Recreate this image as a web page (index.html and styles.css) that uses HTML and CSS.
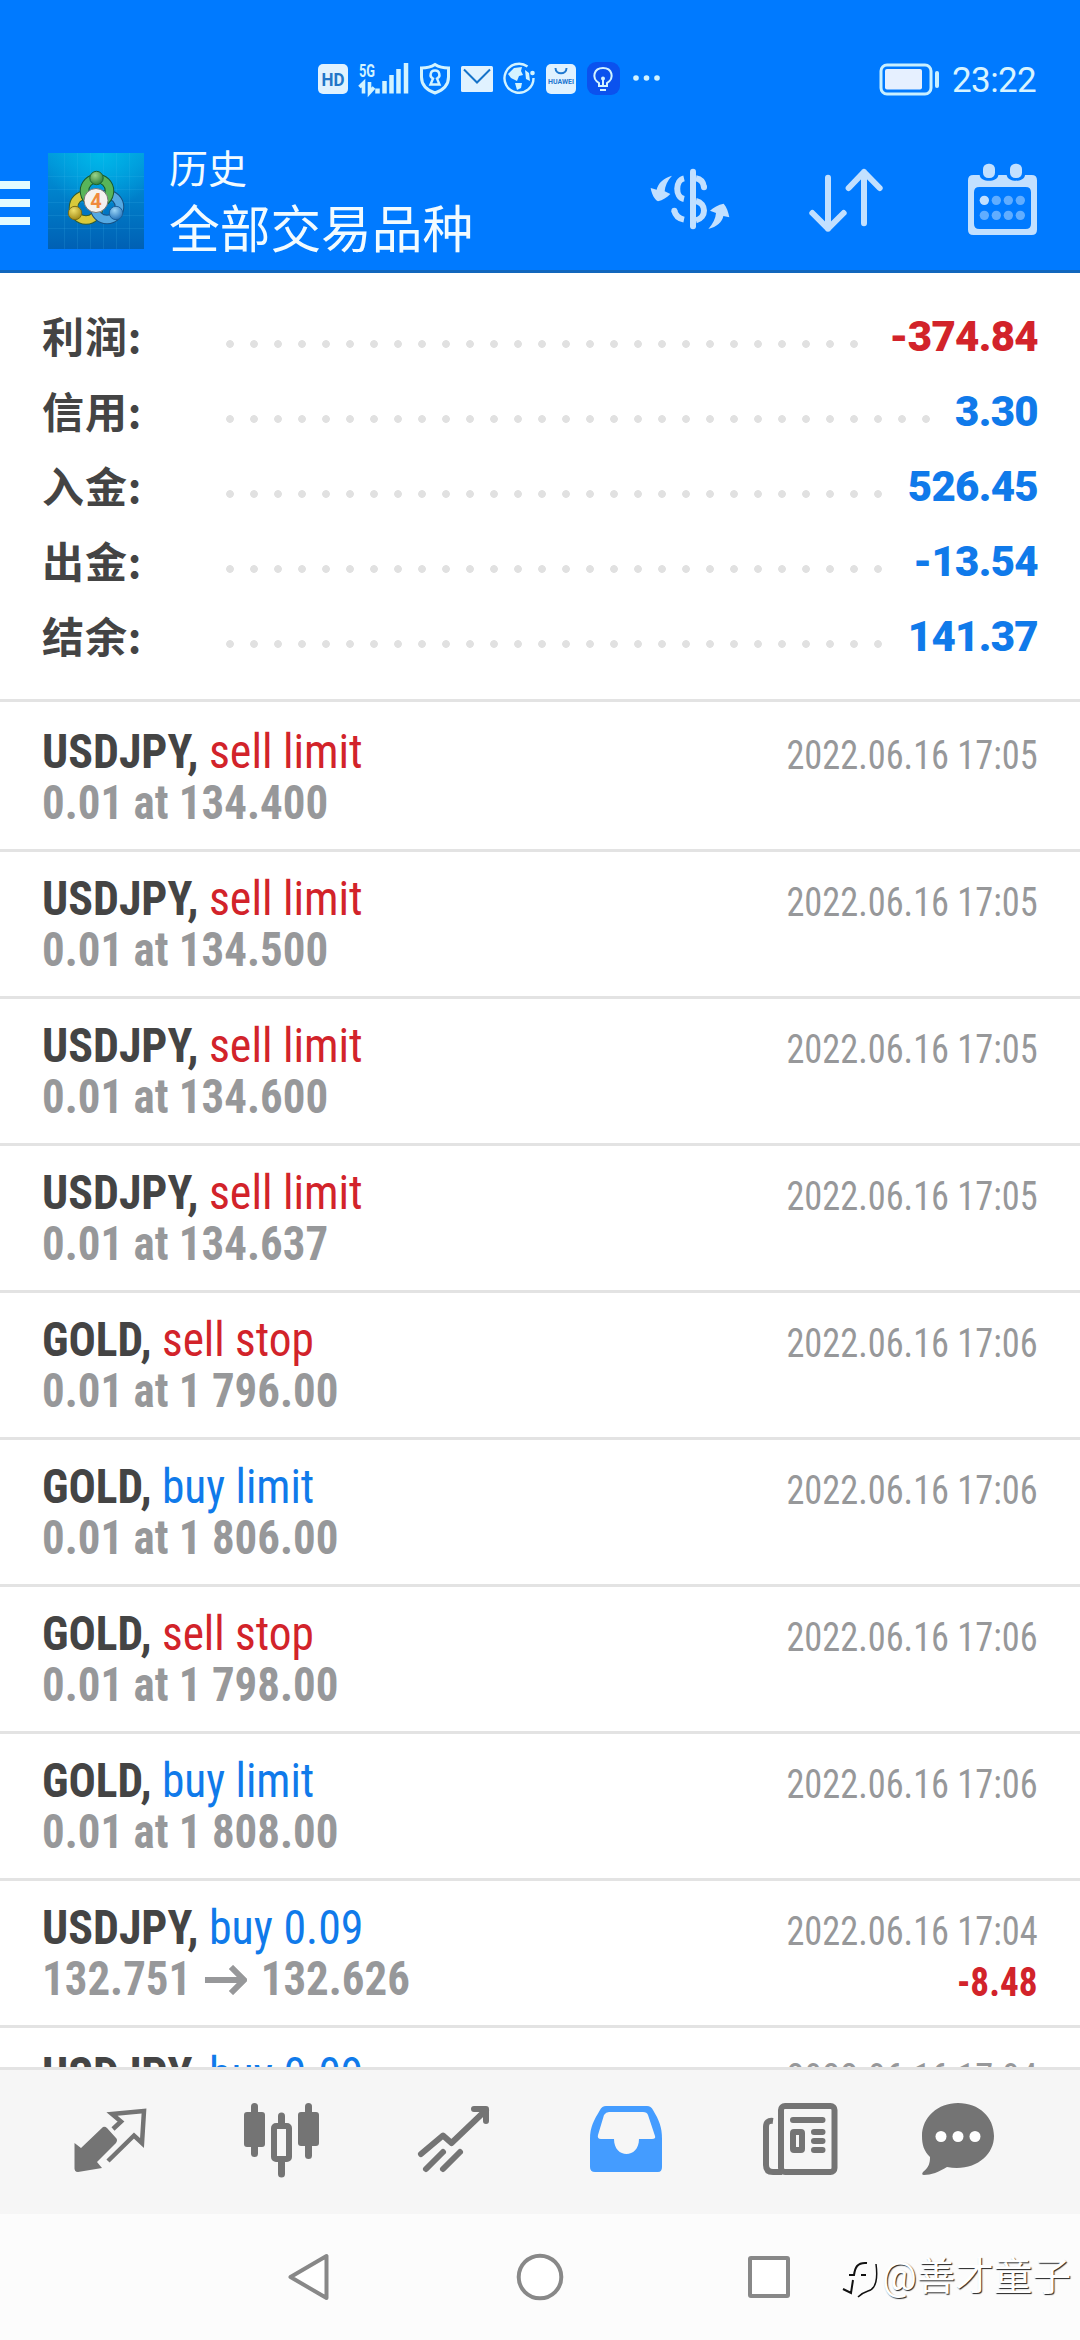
FILE: index.html
```html
<!DOCTYPE html>
<html lang="zh-CN">
<head>
<meta charset="utf-8">
<title>历史</title>
<link rel="stylesheet" href="styles.css">
</head>
<body>
<div class="screen">
<header class="header">
  <div class="statusbar">
    <svg class="status-icons" viewBox="300 40 400 80" width="400" height="80">
      <rect x="318" y="64" width="30" height="30" rx="5" fill="#e0f2ff"/>
      <text x="321.500" y="86" class="hd" textLength="23" lengthAdjust="spacingAndGlyphs">HD</text>
      <text x="359" y="76.500" class="net" textLength="16" lengthAdjust="spacingAndGlyphs">5G</text>
      <g stroke="#d2f3ff" stroke-width="3.600" fill="none">
        <path d="M359.500 87l4-4v10.500M369.500 82v10.500l4.500-5"/>
        <path d="M377.500 88.500v5M384.500 81v12.500M391.500 75v18.500M398.500 69v24.500M406 63v30.500" stroke-width="4.500"/>
      </g>
      <path d="M435 64.500c4 2.500 9 3.500 13.500 3.500v9c0 8-5 13-13.500 16c-8.500-3-13.500-8-13.500-16v-9c4.500 0 9.500-1 13.500-3.500z" fill="none" stroke="#d2f3ff" stroke-width="3"/>
      <path d="M435 70.500a4.200 4.200 0 0 1 2 8l2.500 6h-9l2.500-6a4.200 4.200 0 0 1 2-8z" fill="#007aff" stroke="#d2f3ff" stroke-width="2.400"/>
      <rect x="461" y="66" width="32" height="26" rx="1.500" fill="#e0f2ff"/>
      <path d="M464 69.500l13 13 13-13" fill="none" stroke="#1673c8" stroke-width="2"/>
      <path d="M533.500 78a14.500 14.500 0 1 1-6-11.500" fill="none" stroke="#d2f3ff" stroke-width="2.400"/>
      <circle cx="532.500" cy="73" r="2.300" fill="#d2f3ff"/>
      <path d="M508 74l6-6 8-1-1 4 2 4-4 1-2 5-6-3zM525 70l4 3 1 8-4-2zM515 83l7 0-1 5-4 2z" fill="#d2f3ff"/>
      <rect x="546" y="64" width="30" height="30" rx="5" fill="#e0f2ff"/>
      <path d="M555.500 68c0 7 11 7 11 0" fill="none" stroke="#1e78d0" stroke-width="2"/>
      <text x="548" y="84" class="store" textLength="26" lengthAdjust="spacingAndGlyphs">HUAWEI</text>
      <rect x="587" y="62" width="33" height="33" rx="9" fill="#0b52ee"/>
      <path d="M599 86v-3c-8-5-5-15 4-15s12 10 4 15v3zM600 90h6M603 78v8" fill="none" stroke="#d2f3ff" stroke-width="2"/>
      <circle cx="603" cy="78.500" r="2" fill="#d2f3ff"/>
      <g fill="#d2f3ff"><circle cx="636" cy="78" r="2.800"/><circle cx="646.500" cy="78" r="2.800"/><circle cx="657" cy="78" r="2.800"/></g>
    </svg>
    <div class="status-right">
      <svg viewBox="878 60 64 36" width="64" height="36">
        <rect x="881" y="64" width="50" height="29" rx="6" fill="none" stroke="#c8efff" stroke-width="3"/>
        <rect x="885" y="68" width="37" height="20.500" rx="2" fill="#e6f0ff"/>
        <rect x="935" y="70" width="4" height="17" rx="2" fill="#c8efff"/>
      </svg>
      <span class="clock">23:22</span>
    </div>
  </div>
  <div class="appbar">
    <div class="burger"><i></i><i></i><i></i></div>
    <svg class="logo" viewBox="0 0 96 96" width="96" height="96">
      <defs>
        <linearGradient id="sky" x1="0" y1="0" x2="0" y2="1"><stop offset="0" stop-color="#0099dc"/><stop offset="1" stop-color="#0060b4"/></linearGradient>
        <radialGradient id="glow" cx=".55" cy="0" r=".6"><stop offset="0" stop-color="#00b8ea"/><stop offset="1" stop-color="#00b8ea" stop-opacity="0"/></radialGradient>
        <radialGradient id="gr" cx=".4" cy=".3" r=".8"><stop offset="0" stop-color="#9bd48a"/><stop offset="1" stop-color="#1f7430"/></radialGradient>
        <radialGradient id="ye" cx=".4" cy=".3" r=".8"><stop offset="0" stop-color="#f0e06a"/><stop offset="1" stop-color="#98800c"/></radialGradient>
        <radialGradient id="bl" cx=".4" cy=".3" r=".8"><stop offset="0" stop-color="#9ad4f6"/><stop offset="1" stop-color="#1768b4"/></radialGradient>
      </defs>
      <rect width="96" height="96" fill="url(#sky)"/><rect width="96" height="96" fill="url(#glow)"/>
      <path d="M0 23.500h96M0 36.500h96M0 49.500h96M0 62.500h96M0 75.500h96M16.500 0v96M29.500 0v96M42.500 0v96M55.500 0v96M68.500 0v96M81.500 0v96" stroke="#4cc4f0" stroke-opacity=".15"/>
      <circle cx="38" cy="54.500" r="12.500" fill="none" stroke="#315d30" stroke-width="9.500"/>
      <circle cx="38" cy="54.500" r="12.500" fill="none" stroke="#d8c93a" stroke-width="7.500"/>
      <circle cx="59" cy="54" r="12.500" fill="none" stroke="#174f80" stroke-width="9.500"/>
      <circle cx="59" cy="54" r="12.500" fill="none" stroke="#55a9e2" stroke-width="7.500"/>
      <circle cx="49" cy="38" r="12.500" fill="none" stroke="#19582b" stroke-width="9.500"/>
      <circle cx="49" cy="38" r="12.500" fill="none" stroke="#58b55a" stroke-width="7.500"/>
      <circle cx="48.500" cy="25" r="6.700" fill="url(#gr)" stroke="#1d6430"/>
      <circle cx="27" cy="60" r="6.700" fill="url(#ye)" stroke="#7c6c12"/>
      <circle cx="68" cy="60" r="6.700" fill="url(#bl)" stroke="#1a609e"/>
      <circle cx="48" cy="47.500" r="12" fill="#f4f1ee" stroke="#777" stroke-width="1"/>
      <text x="48" y="54.500" class="four" text-anchor="middle">4</text>
    </svg>
    <div class="titles"><div class="title">历史</div><div class="subtitle">全部交易品种</div></div>
    <div class="actions">
      <svg viewBox="45 60 270 240" width="90" height="80" fill="#c2e0ff">
        <path d="M189 95V259" stroke="#c2e0ff" stroke-width="18" stroke-linecap="round"/>
        <path d="M162 115C136 121 134 171 162 177M133 212C136 227 147 236 162 239M198 115C212 117 220 127 222 142M198 183C230 190 230 233 198 241" fill="none" stroke="#c2e0ff" stroke-width="18"/>
        <circle cx="133" cy="212" r="9"/><circle cx="222" cy="142" r="9"/>
        <path d="M126 107C112 122 105 139 104 154L121 162C111 172 98 181 84 184C73 178 65 162 62 144L80 149C84 130 101 113 126 107Z"/>
        <path d="M235 267C249 251 257 235 258 219L240 212C250 202 265 194 281 191C290 201 295 216 298 232L280 228C277 246 260 261 235 267Z"/>
      </svg>
      <svg class="sort" viewBox="525 60 240 240" width="80" height="80" fill="none" stroke="#c2e0ff" stroke-width="18" stroke-linecap="round" stroke-linejoin="round">
        <path d="M594 113V266M547 219L594 266 641 219M702 250V96M656 144L702 96 749 144"/>
      </svg>
      <svg viewBox="1005 60 225 240" width="75" height="80">
        <path d="M1030 105H1049C1050 128 1104 128 1105 105H1130C1132 128 1184 128 1185 105H1205Q1221 105 1221 121V269Q1221 285 1205 285H1030Q1014 285 1014 269V121Q1014 105 1030 105ZM1048 141Q1032 141 1032 157V251Q1032 267 1048 267H1187Q1203 267 1203 251V157Q1203 141 1187 141Z" fill="#c2e0ff" fill-rule="evenodd"/>
        <rect x="1059" y="71" width="36" height="43" rx="16" fill="#c2e0ff"/><rect x="1140" y="71" width="36" height="43" rx="16" fill="#c2e0ff"/>
        <circle cx="1063" cy="181" r="14" fill="#c2e0ff"/>
        <g fill="#61adff"><circle cx="1099" cy="181" r="14"/><circle cx="1135" cy="181" r="14"/><circle cx="1171" cy="181" r="14"/><circle cx="1063" cy="226" r="14"/><circle cx="1099" cy="226" r="14"/><circle cx="1135" cy="226" r="14"/><circle cx="1171" cy="226" r="14"/></g>
      </svg>
    </div>
  </div>
</header>
<section class="summary">
  <div class="sum-row"><span class="label">利润:</span><i class="leader"></i><b class="red">-374.84</b></div>
  <div class="sum-row"><span class="label">信用:</span><i class="leader"></i><b>3.30</b></div>
  <div class="sum-row"><span class="label">入金:</span><i class="leader"></i><b>526.45</b></div>
  <div class="sum-row"><span class="label">出金:</span><i class="leader"></i><b>-13.54</b></div>
  <div class="sum-row"><span class="label">结余:</span><i class="leader"></i><b>141.37</b></div>
</section>
<main class="deals">
  <div class="deal"><div class="name"><b>USDJPY,</b> <span class="red">sell limit</span></div><div class="date">2022.06.16 17:05</div><div class="price">0.01 at 134.400</div></div>
  <div class="deal"><div class="name"><b>USDJPY,</b> <span class="red">sell limit</span></div><div class="date">2022.06.16 17:05</div><div class="price">0.01 at 134.500</div></div>
  <div class="deal"><div class="name"><b>USDJPY,</b> <span class="red">sell limit</span></div><div class="date">2022.06.16 17:05</div><div class="price">0.01 at 134.600</div></div>
  <div class="deal"><div class="name"><b>USDJPY,</b> <span class="red">sell limit</span></div><div class="date">2022.06.16 17:05</div><div class="price">0.01 at 134.637</div></div>
  <div class="deal"><div class="name gold"><b>GOLD,</b> <span class="red">sell stop</span></div><div class="date">2022.06.16 17:06</div><div class="price">0.01 at 1 796.00</div></div>
  <div class="deal"><div class="name gold"><b>GOLD,</b> <span class="blue">buy limit</span></div><div class="date">2022.06.16 17:06</div><div class="price">0.01 at 1 806.00</div></div>
  <div class="deal"><div class="name gold"><b>GOLD,</b> <span class="red">sell stop</span></div><div class="date">2022.06.16 17:06</div><div class="price">0.01 at 1 798.00</div></div>
  <div class="deal"><div class="name gold"><b>GOLD,</b> <span class="blue">buy limit</span></div><div class="date">2022.06.16 17:06</div><div class="price">0.01 at 1 808.00</div></div>
  <div class="deal"><div class="name"><b>USDJPY,</b> <span class="blue">buy 0.09</span></div><div class="date">2022.06.16 17:04</div><div class="price">132.751 <svg class="arrow" viewBox="0 0 42 30" width="45" height="30" preserveAspectRatio="none"><path d="M0 15H38M26 2L39 15 26 28" fill="none" stroke="#97989a" stroke-width="6"/></svg> 132.626</div><div class="profit red">-8.48</div></div>
  <div class="deal"><div class="name"><b>USDJPY,</b> <span class="blue">buy 0.09</span></div><div class="date">2022.06.16 17:04</div></div>
</main>
<nav class="tabs">
  <svg viewBox="24 2070 172 144"><path d="M74.500 2143L81 2148 103 2127Q105 2126 107 2128L116 2138Q118 2140 116 2143L97 2162 102 2168 78 2172Q74 2172 74.500 2167Z" fill="#747474"/><path d="M113 2129L121 2121.500 112 2114 144 2111 142 2143 134 2135.500 108 2161" fill="none" stroke="#747474" stroke-width="4.500"/></svg>
  <svg viewBox="196 2070 172 144" fill="#747474"><rect x="244" y="2112" width="21" height="35" rx="3"/><rect x="251" y="2103" width="7" height="54" rx="3.500"/><rect x="298" y="2112" width="21" height="34" rx="3"/><rect x="305" y="2103" width="7" height="56" rx="3.500"/><path d="M281.500 2116V2124M281.500 2160V2174" stroke="#747474" stroke-width="7" stroke-linecap="round"/><rect x="274" y="2126" width="15" height="33" rx="2" fill="#f6f6f6" stroke="#747474" stroke-width="6"/></svg>
  <svg viewBox="368 2070 172 144" fill="none" stroke="#747474" stroke-width="6" stroke-linecap="round" stroke-linejoin="round"><path d="M421 2154L443 2135.500 451.500 2143 486 2110M474 2109H486V2121M426 2169L443 2152M443 2169L460 2152"/></svg>
  <svg viewBox="540 2070 172 144"><path d="M606 2106H647Q651 2106 653 2110C659 2120 662 2127 662 2139V2167Q662 2172 658 2172H595Q590 2172 590 2167V2139C590 2127 594 2120 600 2110Q602 2106 606 2106ZM609 2112Q606 2112 604 2115L598 2135Q597 2139 601 2139H614C614 2159 639 2159 639 2139H652Q656 2139 655 2136L648 2115Q647 2112 643 2112Z" fill="#449cff" fill-rule="evenodd"/></svg>
  <svg viewBox="712 2070 172 144" fill="none" stroke="#747474" stroke-width="6"><rect x="781" y="2106" width="53.500" height="66" rx="4"/><path d="M773 2121Q766 2120 766 2127V2165Q766 2172 773 2172H782"/><path d="M793 2120H822.500M814 2132H822.500M814 2141H822.500M814 2150H822.500" stroke-linecap="round"/><rect x="793" y="2132" width="9" height="18" rx="1"/></svg>
  <svg viewBox="884 2070 172 144"><path d="M958 2103C979 2103 994 2117 994 2136C994 2156 974 2172 947 2167C939 2172 931 2175 924 2175Q921 2175 923 2172C929 2167 930 2163 930 2157C924 2151 922 2145 922 2136C922 2117 938 2103 958 2103Z" fill="#747474"/><g fill="#fff"><circle cx="941" cy="2136.500" r="5.500"/><circle cx="958" cy="2136.500" r="5.500"/><circle cx="975" cy="2136.500" r="5.500"/></g></svg>
</nav>
<footer class="sysnav">
  <svg viewBox="260 2214 560 126" width="560" height="126" fill="#fff" stroke="#888" stroke-width="4" stroke-linejoin="round"><path d="M326.500 2256V2298L290.500 2277Z"/><circle cx="540" cy="2277" r="21.300"/><rect x="750" y="2258" width="38" height="38" rx="1"/></svg>
  <div class="watermark">
    <svg viewBox="842 2260 40 44" width="40" height="44" fill="none" stroke="#111" stroke-width="2"><path d="M876 2269C878 2284 876 2294 868 2296Q862 2298 858 2302" stroke-width="1.500"/><path d="M867 2268C857 2267 855 2273 854 2280H849M861 2280H866M853 2285L851 2298 843 2294"/></svg>
    <span>@善才童子</span>
  </div>
</footer>
</div>
</body>
</html>
```
FILE: styles.css
```css
* { box-sizing: border-box; }
body { margin: 0; background: #fff; font-family: Roboto, "Noto Sans CJK SC", sans-serif; }
.screen { width: 1080px; height: 2340px; display: flex; flex-direction: column; overflow: hidden; }
.red { color: #d2232a; }
.blue { color: #107aea; }

.header { height: 273px; background: #007aff; border-bottom: 3px solid #1167bd; color: #f2fbff; }
.statusbar { height: 130px; padding: 40px 45px 0 300px; display: flex; justify-content: space-between; align-items: flex-start; }
.status-right { display: flex; align-items: center; gap: 10px; height: 78px; color: #d8f4ff; }
.clock { font-size: 35px; line-height: 40px; width: 83px; letter-spacing: -0.6px; padding-top: 3px; }
.hd { font: 700 19px Roboto, sans-serif; fill: #2276c8; }
.net { font: 700 18px Roboto, sans-serif; fill: #d2f3ff; }
.store { font: 700 6.500px Roboto, sans-serif; fill: #1e78d0; }
.four { font: 700 20px Roboto, sans-serif; fill: #f08a3c; }
.appbar { height: 140px; display: flex; align-items: center; padding-right: 40px; }
.burger { width: 30px; margin: 6px 18px 0 0; display: flex; flex-direction: column; gap: 10px; }
.burger i { height: 8px; background: #e2fbff; }
.logo { margin-top: 2px; }
.titles { margin-left: 25px; flex: 1; line-height: 60px; }
.title { font-size: 39px; }
.subtitle { font-size: 50.7px; padding-top: 1px; }
.actions { display: flex; }
.sort { margin: 0 80px 0 70px; }

.summary { height: 426px; padding: 26px 42px 0; }
.sum-row { height: 75px; display: flex; align-items: center; font-size: 42px; line-height: 75px; font-weight: 700; color: #444; }
.label { width: 176px; font-family: "Noto Sans CJK SC", sans-serif; letter-spacing: 0.9px; padding-bottom: 5px; }
.leader { flex: 1; height: 24px; margin: 15px 20px 0 0; background: radial-gradient(circle at center, #e1e1e1 3.500px, transparent 4.200px) 0 0 / 24px 24px; }
.sum-row b { color: #107aea; letter-spacing: -0.7px; }
.sum-row b.red { color: #d2232a; }

.deals { height: 1368px; overflow: hidden; }
.deal { height: 147px; border-top: 3px solid #e3e3e3; padding: 25px 42px 0; display: grid; grid-template-columns: 1fr auto; grid-auto-rows: 51px; line-height: 51px; font-family: "Roboto Condensed", Roboto, sans-serif; font-stretch: 75%; font-size: 48px; white-space: nowrap; }
.deal:first-child { height: 150px; padding-top: 28px; }
.name, .price { line-height: 43px; transform-origin: left center; }
.name { transform: scaleX(0.956); }
.name.gold { transform: scaleX(0.944); }
.name b { color: #444; }
.price { color: #97989a; font-weight: 700; transform: scaleX(0.936); }
.arrow { margin: 0 4px 0 3px; }
.date, .profit { font-size: 40px; text-align: right; transform-origin: right center; }
.date { color: #97989a; transform: scaleX(0.908); }
.profit { font-weight: 700; transform: scaleX(0.93); }

.tabs { height: 147px; border-top: 3px solid #e3e3e3; background: #f6f6f6; padding: 0 24px; display: flex; }
.tabs svg { width: 172px; height: 144px; }
.sysnav { height: 126px; background: #fcfcfc; padding-left: 260px; display: flex; }
.watermark { display: flex; align-items: center; margin-left: 22px; white-space: nowrap; font-size: 38.6px; line-height: 50px; color: #fff; text-shadow: 1px 1px 1px #222; }
```
